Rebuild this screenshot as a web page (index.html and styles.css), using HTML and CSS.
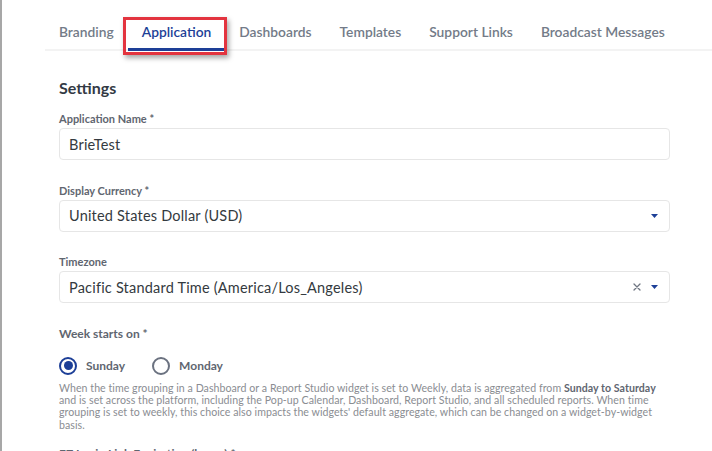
FILE: index.html
```html
<!DOCTYPE html>
<html lang="en">
<head>
<meta charset="utf-8">
<title>Application Settings</title>
<link rel="stylesheet" href="styles.css">
</head>
<body>
<div class="edge"></div>
<div class="main">
  <nav class="tabs">
    <a class="tab">Branding</a>
    <a class="tab active">Application<span class="highlight"></span></a>
    <a class="tab">Dashboards</a>
    <a class="tab">Templates</a>
    <a class="tab">Support Links</a>
    <a class="tab">Broadcast Messages</a>
  </nav>
  <section class="content">
    <h2 class="heading">Settings</h2>

    <div class="field">
      <label class="label">Application Name *</label>
      <div class="input"><span class="value">BrieTest</span></div>
    </div>

    <div class="field">
      <label class="label">Display Currency *</label>
      <div class="input select">
        <span class="value">United States Dollar (USD)</span>
        <span class="controls">
          <svg class="caret" width="7" height="4" viewBox="0 0 7 4"><path d="M0 0H7L3.5 4Z" fill="#1d3f97"/></svg>
        </span>
      </div>
    </div>

    <div class="field">
      <label class="label">Timezone</label>
      <div class="input select">
        <span class="value">Pacific Standard Time (America/Los_Angeles)</span>
        <span class="controls">
          <svg class="clear" width="8" height="8" viewBox="0 0 8 8"><path d="M1 1L7 7M7 1L1 7" stroke="#6f7682" stroke-width="1.3" stroke-linecap="round"/></svg>
          <svg class="caret" width="7" height="4" viewBox="0 0 7 4"><path d="M0 0H7L3.5 4Z" fill="#1d3f97"/></svg>
        </span>
      </div>
    </div>

    <div class="field week">
      <label class="label big">Week starts on *</label>
      <div class="radios">
        <span class="radio checked"><span class="dot"></span></span><span class="radio-label">Sunday</span>
        <span class="radio"></span><span class="radio-label">Monday</span>
      </div>
      <p class="help">When the time grouping in a Dashboard or a Report Studio widget is set to Weekly, data is aggregated from <b>Sunday to Saturday</b> and is set across the platform, including the Pop-up Calendar, Dashboard, Report Studio, and all scheduled reports. When time grouping is set to weekly, this choice also impacts the widgets' default aggregate, which can be changed on a widget-by-widget basis.</p>
    </div>

    <div class="field">
      <label class="label big">EZ Login Link Expiration (hours) *</label>
    </div>
  </section>
</div>
</body>
</html>
```

FILE: styles.css
```css
html, body {
  margin: 0;
  padding: 0;
  height: 100%;
  background: #ffffff;
  overflow: hidden;
}
body {
  display: flex;
  font-family: Lato, "Noto Sans", sans-serif;
  color: #333;
}
.edge {
  width: 2px;
  flex: none;
  background: #a7a7a7;
}
.main {
  flex: 1;
  padding-left: 43px;
}
.tabs {
  display: flex;
  margin-top: 15px;
  border-bottom: 2px solid #f3f3f3;
}
.tab {
  position: relative;
  display: block;
  padding: 0 14px;
  height: 34px;
  line-height: 34px;
  font-size: 13.8px;
  font-weight: 600;
  color: #737b88;
}
.tab.active {
  color: #1d3f97;
  height: 33px;
  border-bottom: 3px solid #1d3f97;
  margin-bottom: -2px;
}
.highlight {
  position: absolute;
  left: -5px;
  right: -2px;
  top: 2px;
  bottom: -7px;
  border: 3px solid #e3343f;
  box-shadow: 2px 3px 5px rgba(0, 0, 0, 0.35);
  pointer-events: none;
}
.content {
  padding-left: 14px;
  width: 611px;
}
.heading {
  margin: 27px 0 14px;
  font-size: 16px;
  line-height: 20px;
  font-weight: 700;
  color: #333a44;
}
.field {
  margin-bottom: 23.5px;
}
.label {
  display: block;
  font-size: 11px;
  line-height: 14px;
  font-weight: 700;
  color: #5f6670;
  margin-bottom: 2px;
}
.label.big {
  font-size: 12px;
}
.input {
  box-sizing: border-box;
  height: 32px;
  border: 1px solid #e6e6e6;
  border-radius: 4px;
  display: flex;
  align-items: center;
  padding: 0 11px 0 9px;
}
.value {
  flex: 1;
  font-size: 14.5px;
  letter-spacing: 0.2px;
  color: #343a40;
}
.controls {
  display: flex;
  align-items: center;
  gap: 10px;
}
.caret {
  display: block;
}
.clear {
  display: block;
}
.field.week {
  margin-bottom: 16px;
}
.field.week .label {
  margin-bottom: 16px;
}
.radios {
  display: flex;
  align-items: center;
  height: 18px;
}
.radio {
  box-sizing: border-box;
  width: 18px;
  height: 18px;
  border: 2px solid #6b7280;
  border-radius: 50%;
  display: flex;
  align-items: center;
  justify-content: center;
}
.radio.checked {
  border-color: #1d3f97;
}
.dot {
  width: 9px;
  height: 9px;
  border-radius: 50%;
  background: #1d3f97;
}
.radio-label {
  margin-left: 9px;
  margin-right: 27px;
  font-size: 12px;
  font-weight: 700;
  color: #5f6670;
}
.help {
  margin: 7px 0 0;
  font-size: 10.6px;
  line-height: 12.4px;
  letter-spacing: 0.05px;
  color: #8a8d92;
  width: 611px;
}
.help b {
  color: #5f6670;
  font-weight: 700;
}
```
